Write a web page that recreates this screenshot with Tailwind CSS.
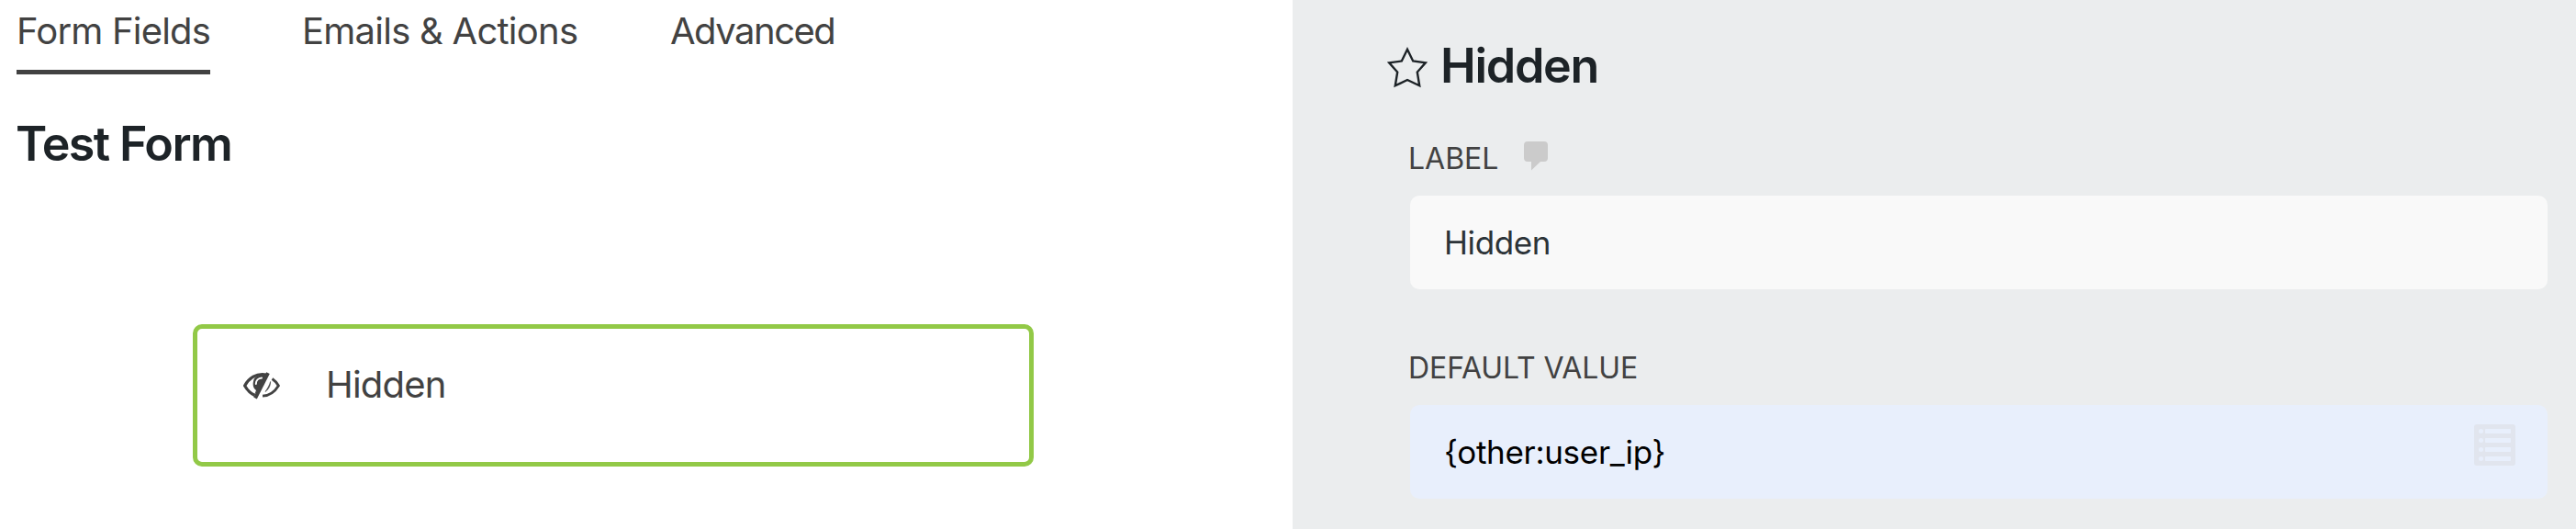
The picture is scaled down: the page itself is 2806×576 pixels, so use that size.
<!DOCTYPE html>
<html lang="en">
<head>
  <meta charset="UTF-8">
  <meta name="viewport" content="width=device-width, initial-scale=1.0">
  <title>Test Form</title>
  <script src="https://cdn.jsdelivr.net/npm/@tailwindcss/browser@4"></script>
</head>
<body class="bg-white font-['Inter',sans-serif]">
  <div class="flex h-[576px] w-[2806px] overflow-hidden">
    <!-- Form builder -->
    <main class="w-[1408px] shrink-0 pl-[18px]">
      <nav class="flex gap-[100px] text-[40px] leading-[48px] text-[#424242] whitespace-nowrap">
        <a class="h-[81px] w-[211px] border-b-5 border-[#424242] pt-[10px] tracking-[-0.8px]">Form Fields</a>
        <a class="w-[301px] pt-[10px] tracking-[-0.75px]">Emails &amp; Actions</a>
        <a class="pt-[10px] tracking-[-1.5px]">Advanced</a>
      </nav>

      <h1 class="mt-[45px] -ml-px text-[52px] leading-[62px] font-semibold tracking-[-1.6px] text-[#1d2327]">Test Form</h1>

      <!-- Selected field -->
      <div class="mt-[165px] ml-[192px] flex h-[155px] w-[916px] items-start rounded-[10px] border-5 border-[#92c947] pt-[37px] pl-[50px]">
        <svg class="mt-[10px] h-[30px] w-[40px] text-[#424242]" viewBox="0 0 40 30" fill="none" stroke="currentColor">
          <path d="M25 3C14 1 6 7 1.6 15C4.500 20 8 23.500 12.500 25.500" stroke-width="3.200"/>
          <path d="M12 7C10 12 10 17 14 20L12 25L20 15L25 4C20 2.500 15 4 12 7Z" fill="currentColor" stroke="none"/>
          <path d="M13.800 13C13.800 9.500 16.500 6.800 20 6.600" stroke="#fff" stroke-width="2" stroke-linecap="round"/>
          <path d="M27 1.200L13 28.500" stroke-width="4"/>
          <path d="M31.500 7.500C34.500 9.500 36.700 12 38.400 15C34 22 28.500 26 21 26.200" stroke-width="2.800"/>
          <path d="M29.600 10.500C29.600 15 28 18.500 24 21.500C26.500 18 28.500 14.500 29.600 10.500Z" fill="currentColor" stroke-width="0.600"/>
        </svg>
        <span class="ml-[50px] text-[40px] leading-[48px] tracking-[-0.8px] text-[#424242]">Hidden</span>
      </div>
    </main>

    <!-- Field settings -->
    <aside class="w-[1398px] bg-[#ebedee] pt-[40px] pl-[102px]">
      <div class="flex h-[62px] items-start">
        <svg class="mt-[11px] h-[45px] w-[46px] text-[#1d2327]" viewBox="0 0 46 45" fill="none" stroke="currentColor" stroke-width="2.400">
          <path d="M23 2.800L29.200 15.500L42.800 17.300L33.800 27.500L36.200 42.300L23 36L9.800 42.300L12.200 27.500L3.200 17.300L16.800 15.500Z"/>
        </svg>
        <h2 class="ml-[13px] pt-px text-[52px] leading-[62px] font-semibold tracking-[-1.3px] text-[#1d2327]">Hidden</h2>
      </div>

      <div class="mt-[50px] ml-[24px] flex h-[61px] items-start">
        <label for="label" class="w-[126px] pt-[1px] text-[32px] leading-[40px] text-[#424242]">LABEL</label>
        <svg class="mt-[2px] h-[32px] w-[26px]" viewBox="0 0 26 32" fill="#cbcbcb">
          <path d="M4 0H22Q26 0 26 4V18Q26 22 22 22H18L8 31.500V22H4Q0 22 0 18V4Q0 0 4 0Z"/>
        </svg>
      </div>
      <input id="label" type="text" value="Hidden" class="ml-[26px] block h-[102px] w-[1239px] rounded-[10px] bg-[#f9f9f9] px-[37px] text-[35px] tracking-[-0.4px] text-[#2c3338]">

      <label for="default-value" class="mt-[66px] ml-[24px] block h-[60px] text-[32px] leading-[40px] tracking-[-0.1px] text-[#424242]">DEFAULT VALUE</label>
      <div class="relative ml-[26px] w-[1239px]">
        <input id="default-value" type="text" value="{other:user_ip}" class="block h-[102px] w-full rounded-[10px] bg-[#e8effc] px-[37px] text-[35px] tracking-[-0.3px] text-black">
        <!-- Merge tags -->
        <svg class="absolute top-[21px] right-[35px] size-[45px]" viewBox="0 0 45 45">
          <rect width="45" height="45" rx="3" fill="#e1e5ee"/>
          <g fill="#e8effc">
            <circle cx="7.500" cy="7.500" r="2.500"/><rect x="12" y="5" width="28" height="5" rx="1"/>
            <circle cx="7.500" cy="17.500" r="2.500"/><rect x="12" y="15" width="28" height="5" rx="1"/>
            <circle cx="7.500" cy="27.500" r="2.500"/><rect x="12" y="25" width="28" height="5" rx="1"/>
            <circle cx="7.500" cy="37.500" r="2.500"/><rect x="12" y="35" width="28" height="5" rx="1"/>
          </g>
        </svg>
      </div>
    </aside>
  </div>
</body>
</html>
